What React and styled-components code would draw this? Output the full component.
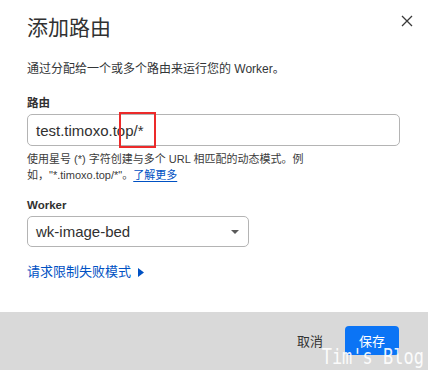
import React from 'react';
import styled, { createGlobalStyle } from 'styled-components';

const GlobalStyle = createGlobalStyle`
  html, body {
    margin: 0;
    padding: 0;
    background: #ffffff;
  }
  body {
    font-family: "Liberation Sans", "Noto Sans CJK SC", sans-serif;
    color: #313131;
  }
`;

const Modal = styled.div`
  position: relative;
  width: 428px;
  height: 370px;
  display: flex;
  flex-direction: column;
  background: #fff;
  overflow: hidden;
`;

const Header = styled.div`
  display: flex;
  justify-content: space-between;
  align-items: flex-start;
  padding: 17px 14px 0 27px;
`;

const Title = styled.h2`
  margin: 0;
  font-size: 21px;
  line-height: 21px;
  font-weight: 400;
  color: #313131;
`;

const CloseButton = styled.button`
  border: none;
  background: none;
  padding: 0;
  margin-top: -3px;
  width: 14px;
  height: 14px;
  display: flex;
  align-items: center;
  justify-content: center;
  cursor: pointer;
  color: #333;
`;

const Body = styled.div`
  flex: 1;
  display: flex;
  flex-direction: column;
  padding: 0 28px 0 27px;
`;

const Description = styled.p`
  margin: 23px 0 0;
  font-size: 12px;
  line-height: 16px;
  color: #333638;
`;

const Label = styled.label`
  display: block;
  margin-top: ${p => p.$top}px;
  font-size: 11.5px;
  line-height: 14px;
  font-weight: 700;
  color: #313131;
`;

const Field = styled.div`
  position: relative;
  margin-top: ${p => p.$top}px;
  width: ${p => p.$width}px;
  height: ${p => p.$height}px;
  box-sizing: border-box;
  border: 1px solid #b4b4b4;
  border-radius: 5px;
  display: flex;
  align-items: center;
  justify-content: space-between;
  padding: 0 8px 0 8px;
  font-size: 15px;
  color: #313131;
  background: #fff;
`;

const Highlight = styled.div`
  position: absolute;
  left: 91px;
  top: -3px;
  width: 37px;
  height: 36px;
  box-sizing: border-box;
  border: 2px solid #ec2a2a;
`;

const Caret = styled.span`
  width: 0;
  height: 0;
  border-left: 4px solid transparent;
  border-right: 4px solid transparent;
  border-top: 4px solid #5a5a5a;
  margin-right: 1px;
`;

const Help = styled.p`
  margin: 5px 0 0;
  font-size: 11px;
  line-height: 16px;
  color: #3b3b3b;
`;

const Link = styled.a`
  color: #0051c3;
  text-decoration: underline;
  text-underline-offset: 2px;
`;

const Toggle = styled.div`
  margin-top: 17px;
  display: flex;
  align-items: center;
  gap: 7px;
  font-size: 13px;
  line-height: 16px;
  color: #0051c3;
`;

const Footer = styled.div`
  height: 58px;
  background: #d9d9d9;
  display: flex;
  justify-content: flex-end;
  align-items: flex-start;
  gap: 22px;
  padding: 14px 29px 0 0;
  box-sizing: border-box;
`;

const Button = styled.button`
  font-family: inherit;
  font-size: 13px;
  border: none;
  border-radius: 4px;
  cursor: pointer;
  height: 29px;
  padding: 0 ${p => (p.$primary ? 14 : 0)}px;
  color: ${p => (p.$primary ? '#fff' : '#333')};
  background: ${p => (p.$primary ? '#0b74f5' : 'transparent')};
  min-width: ${p => (p.$primary ? 53 : 0)}px;
`;

const Watermark = styled.div`
  position: absolute;
  right: 4px;
  bottom: 1px;
  font-family: "DejaVu Sans Mono", monospace;
  font-size: 17px;
  line-height: 20px;
  color: rgba(255, 255, 255, 0.92);
  transform: scaleY(1.25);
  transform-origin: bottom right;
  pointer-events: none;
`;

export default function App() {
  return (
    <>
      <GlobalStyle />
      <Modal>
        <Header>
          <Title>添加路由</Title>
          <CloseButton aria-label="关闭">
            <svg width="12" height="12" viewBox="0 0 12 12">
              <path d="M1 1 L11 11 M11 1 L1 11" stroke="#3a3a3a" strokeWidth="1.3" />
            </svg>
          </CloseButton>
        </Header>
        <Body>
          <Description>通过分配给一个或多个路由来运行您的 Worker。</Description>
          <Label $top={19}>路由</Label>
          <Field $top={4} $width={373} $height={32}>
            <span>test.timoxo.top/*</span>
            <Highlight />
          </Field>
          <Help>
            使用星号 (*) 字符创建与多个 URL 相匹配的动态模式。例<br />
            如，"*.timoxo.top/*"。<Link>了解更多</Link>
          </Help>
          <Label $top={15}>Worker</Label>
          <Field $top={4} $width={222} $height={31}>
            <span>wk-image-bed</span>
            <Caret />
          </Field>
          <Toggle>
            请求限制失败模式
            <svg width="6" height="9" viewBox="0 0 6 9">
              <path d="M0 0 L6 4.5 L0 9 Z" fill="#0051c3" />
            </svg>
          </Toggle>
        </Body>
        <Footer>
          <Button>取消</Button>
          <Button $primary>保存</Button>
        </Footer>
        <Watermark>Tim's Blog</Watermark>
      </Modal>
    </>
  );
}
